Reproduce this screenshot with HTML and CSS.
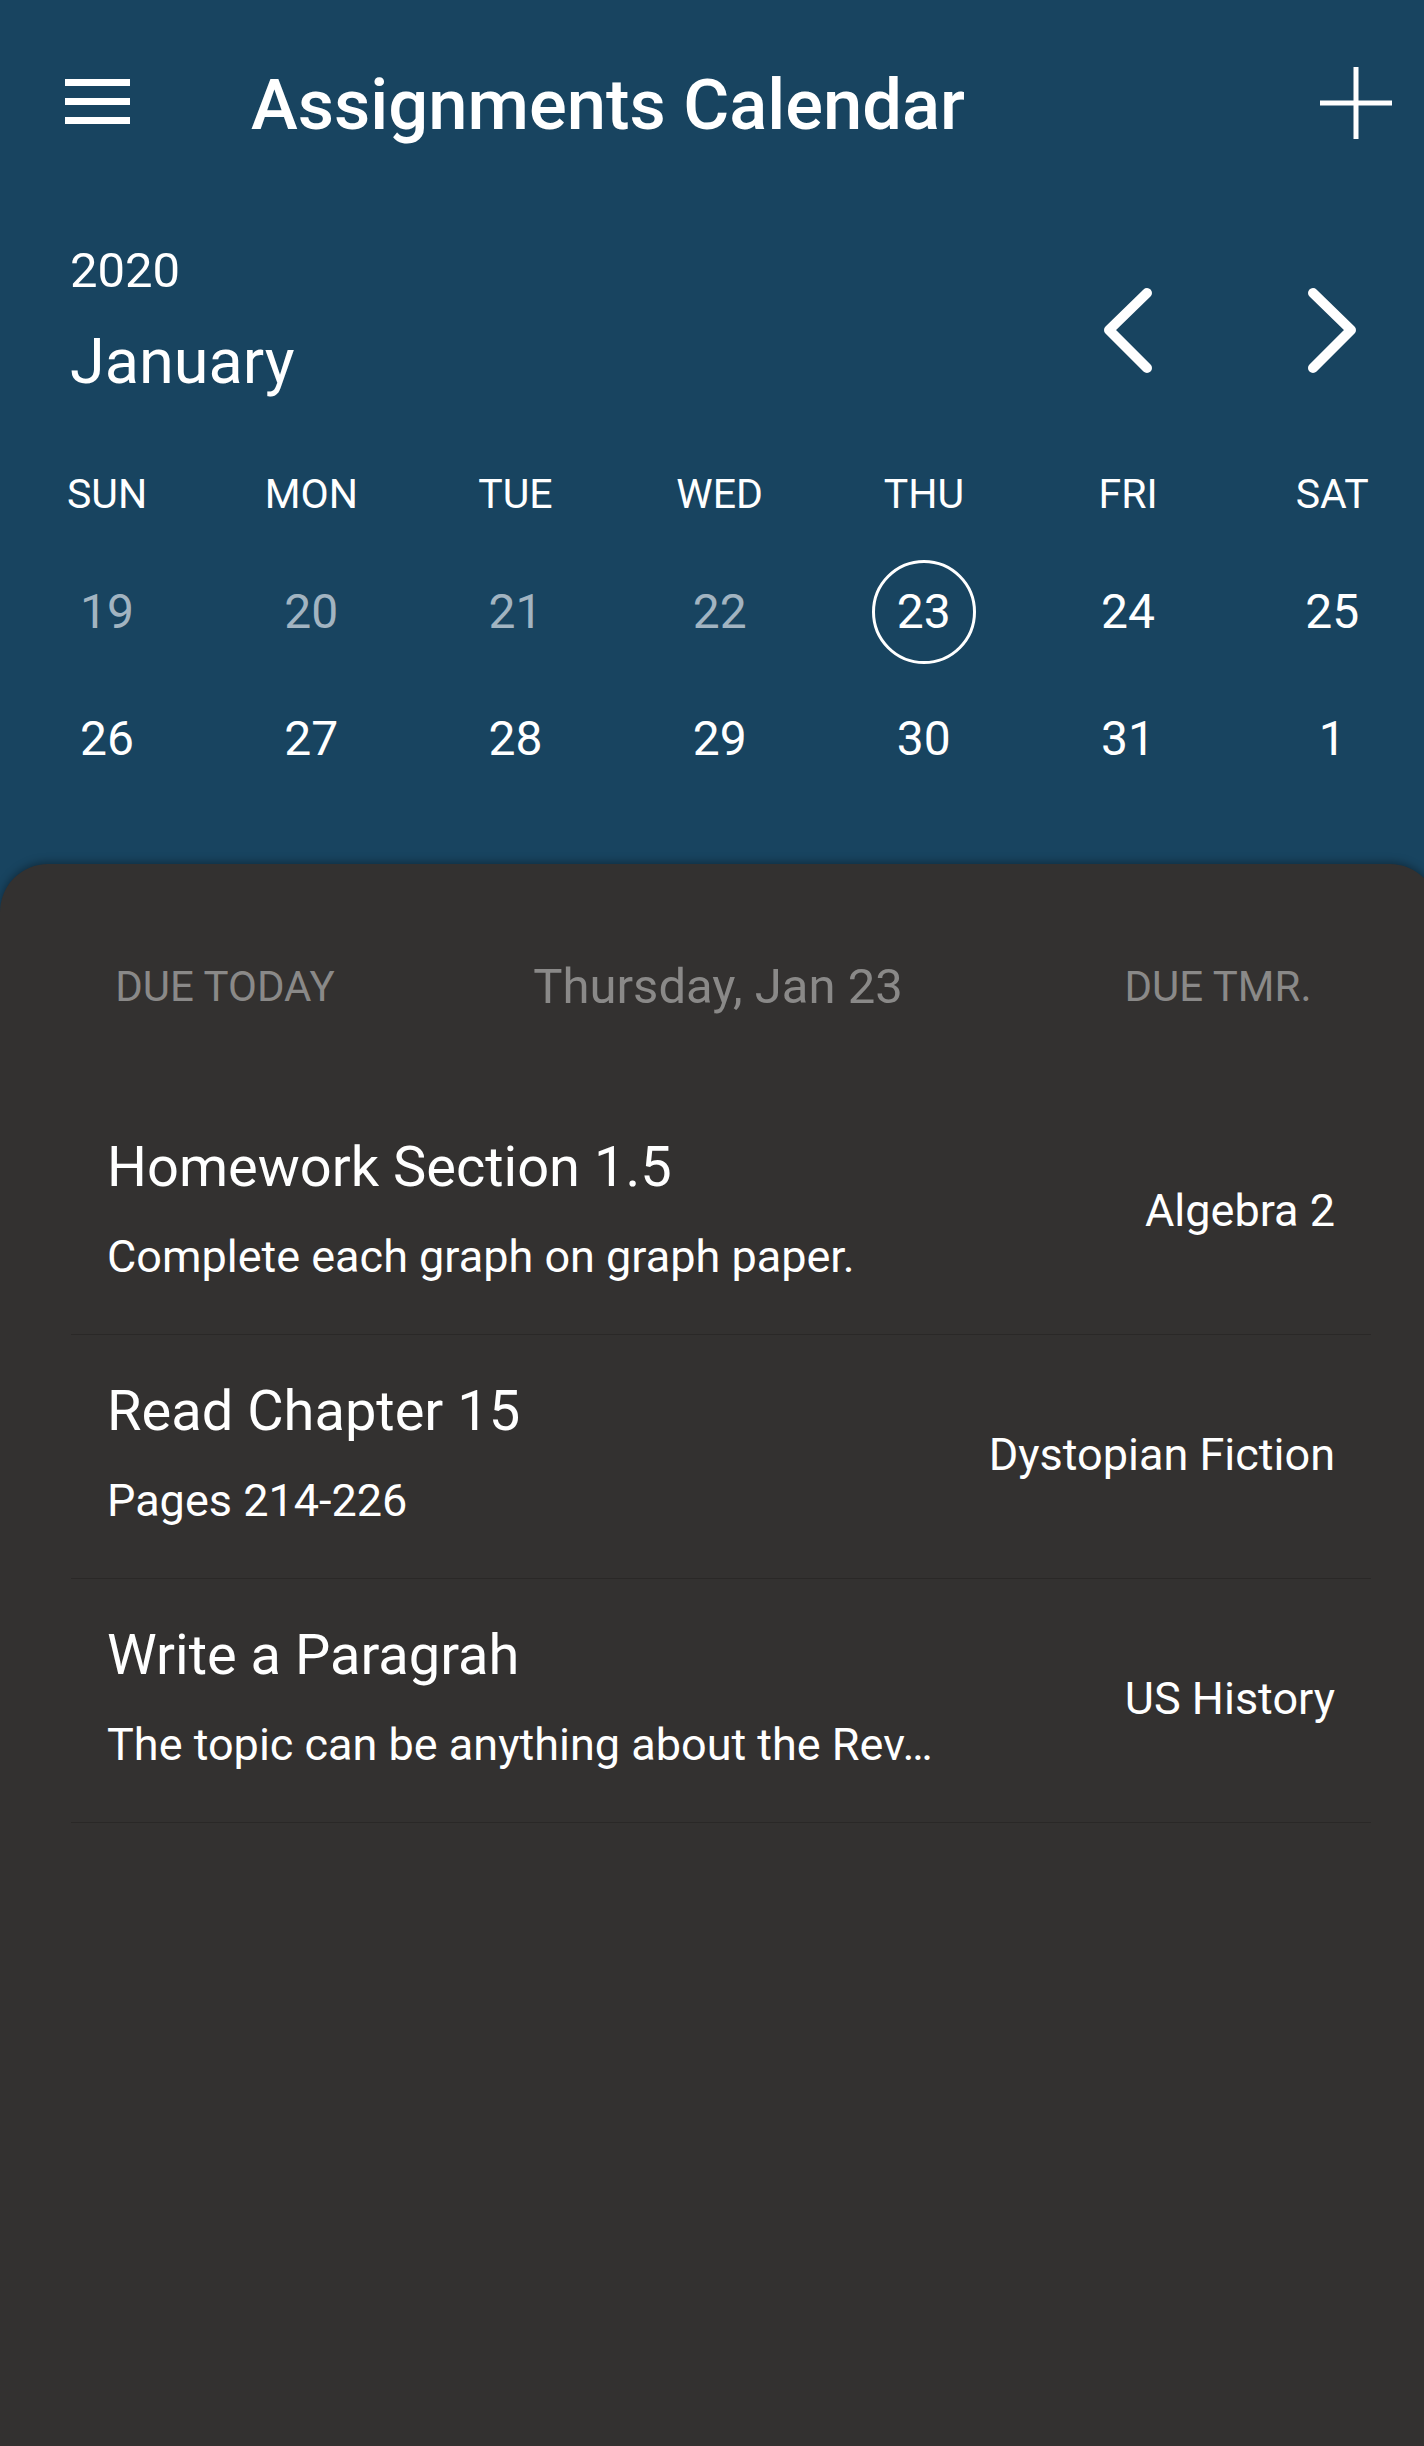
FILE: index.html
```html
<!DOCTYPE html>
<html lang="en">
<head>
<meta charset="utf-8">
<title>Assignments Calendar</title>
<link rel="stylesheet" href="styles.css">
</head>
<body>
<div class="app">
  <header class="toolbar">
    <button class="icon-btn menu-btn" aria-label="Menu">
      <svg width="65" height="45" viewBox="0 0 65 45"><rect x="0" y="0" width="65" height="7" fill="#fff"/><rect x="0" y="19" width="65" height="7" fill="#fff"/><rect x="0" y="38" width="65" height="7" fill="#fff"/></svg>
    </button>
    <h1 class="toolbar-title">Assignments Calendar</h1>
    <button class="icon-btn add-btn" aria-label="Add">
      <svg width="72" height="72" viewBox="0 0 72 72"><path d="M36 0V72M0 36H72" stroke="#fff" stroke-width="5" fill="none"/></svg>
    </button>
  </header>

  <section class="month-header">
    <div class="month-label">
      <div class="year">2020</div>
      <div class="month">January</div>
    </div>
    <div class="month-nav">
      <button class="icon-btn nav-btn" aria-label="Previous month">
        <svg width="70" height="100" viewBox="0 0 70 100"><path d="M57 13L19 50L57 88" stroke="#fff" stroke-width="10" stroke-linecap="round" stroke-linejoin="round" fill="none"/></svg>
      </button>
      <button class="icon-btn nav-btn" aria-label="Next month">
        <svg width="70" height="100" viewBox="0 0 70 100"><path d="M15 13L53 50L15 88" stroke="#fff" stroke-width="10" stroke-linecap="round" stroke-linejoin="round" fill="none"/></svg>
      </button>
    </div>
  </section>

  <div class="weekdays">
    <span>SUN</span><span>MON</span><span>TUE</span><span>WED</span><span>THU</span><span>FRI</span><span>SAT</span>
  </div>
  <div class="week">
    <span class="day past">19</span><span class="day past">20</span><span class="day past">21</span><span class="day past">22</span><span class="day"><span class="today">23</span></span><span class="day">24</span><span class="day">25</span>
  </div>
  <div class="week">
    <span class="day">26</span><span class="day">27</span><span class="day">28</span><span class="day">29</span><span class="day">30</span><span class="day">31</span><span class="day">1</span>
  </div>

  <main class="sheet">
    <nav class="tabs">
      <span class="tab tab-small">DUE TODAY</span>
      <span class="tab tab-date">Thursday, Jan 23</span>
      <span class="tab tab-small">DUE TMR.</span>
    </nav>
    <ul class="assignments">
      <li class="assignment">
        <div class="info">
          <div class="a-title">Homework Section 1.5</div>
          <div class="a-desc">Complete each graph on graph paper.</div>
        </div>
        <div class="subject">Algebra 2</div>
      </li>
      <li class="assignment">
        <div class="info">
          <div class="a-title">Read Chapter 15</div>
          <div class="a-desc">Pages 214-226</div>
        </div>
        <div class="subject">Dystopian Fiction</div>
      </li>
      <li class="assignment">
        <div class="info">
          <div class="a-title">Write a Paragrah</div>
          <div class="a-desc">The topic can be anything about the Rev…</div>
        </div>
        <div class="subject">US History</div>
      </li>
    </ul>
  </main>
</div>
</body>
</html>
```

FILE: styles.css
```css
* { box-sizing: border-box; }
html, body {
  margin: 0;
  padding: 0;
}
body {
  background: #184460;
  font-family: Roboto, "Noto Sans", "Liberation Sans", sans-serif;
  color: #fff;
  overflow: hidden;
  width: 1424px;
  height: 2446px;
}
.app {
  width: 1424px;
}
.icon-btn {
  background: none;
  border: 0;
  padding: 0;
  margin: 0;
  display: flex;
  align-items: center;
  justify-content: center;
  cursor: pointer;
}
.toolbar {
  height: 206px;
  display: flex;
  align-items: center;
}
.menu-btn {
  margin-left: 65px;
  margin-top: -4px;
}
.toolbar-title {
  margin: 0 0 0 121px;
  font-size: 70.5px;
  font-weight: 500;
  line-height: 80px;
  padding-top: 4px;
}
.add-btn {
  margin-left: auto;
  margin-right: 32px;
}
.month-header {
  display: flex;
  align-items: flex-start;
  padding: 35px 56px 0 70px;
}
.year {
  font-size: 49px;
  line-height: 60px;
}
.month {
  font-size: 63px;
  line-height: 72px;
  margin-top: 25px;
}
.month-nav {
  margin-left: auto;
  margin-top: 39px;
  display: flex;
  gap: 138px;
}
.weekdays, .week {
  display: grid;
  grid-template-columns: repeat(7, 204.2px);
  padding-left: 5px;
  text-align: center;
}
.weekdays {
  margin-top: 71px;
  font-size: 41px;
  line-height: 50px;
}
.weekdays span { display: block; }
.week {
  height: 127px;
}
.weekdays + .week { margin-top: 29px; }
.day {
  display: flex;
  align-items: center;
  justify-content: center;
  font-size: 48px;
  height: 127px;
}
.day.past { color: #a2b4c1; }
.today {
  width: 104px;
  height: 104px;
  border: 3.5px solid #fff;
  border-radius: 50%;
  display: flex;
  align-items: center;
  justify-content: center;
}
.sheet {
  margin-top: 62px;
  margin-right: -14px;
  width: 1438px;
  min-height: 1582px;
  background: #333130;
  border-radius: 48px 48px 0 0;
  box-shadow: 0 -2px 8px rgba(0, 0, 0, 0.35);
  padding-top: 93px;
}
.tabs {
  display: grid;
  grid-template-columns: 450px 536px 464px;
  align-items: center;
  height: 60px;
  color: #8a8988;
  text-align: center;
}
.tab-small { font-size: 42px; line-height: 60px; }
.tab-date { font-size: 49px; line-height: 60px; }
.assignments {
  list-style: none;
  margin: 74px 67px 0 71px;
  padding: 0;
}
.assignment {
  display: flex;
  align-items: center;
  height: 244px;
  padding: 0 36px 4px 36px;
  border-bottom: 1.5px solid #2a2827;
}
.info {
  flex: 1;
  min-width: 0;
}
.a-title {
  font-size: 56px;
  line-height: 66px;
}
.a-desc {
  font-size: 45px;
  line-height: 60px;
  margin-top: 27px;
  white-space: nowrap;
}
.subject {
  font-size: 45px;
  line-height: 60px;
  white-space: nowrap;
}
```
